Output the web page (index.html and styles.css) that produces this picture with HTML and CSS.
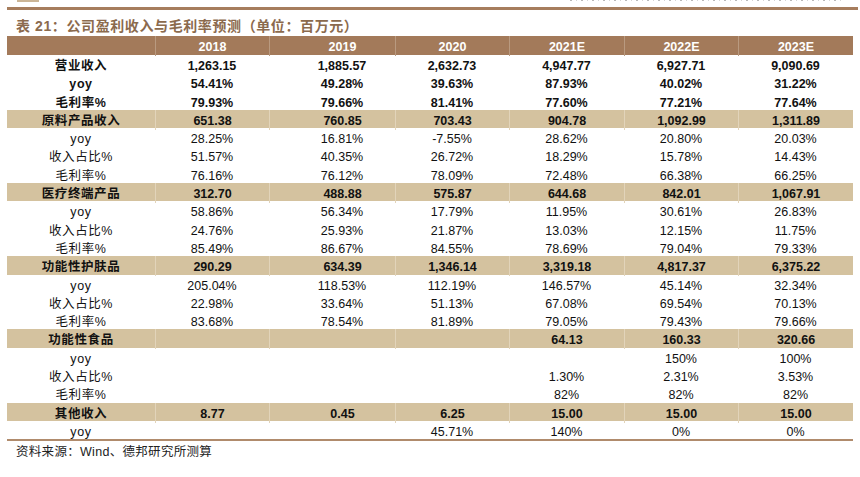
FILE: index.html
```html
<!DOCTYPE html>
<html lang="zh-CN">
<head>
<meta charset="utf-8">
<title>表 21</title>
<link rel="stylesheet" href="styles.css">
</head>
<body>
<div class="page">
  <div class="topstrip">
    <div class="tab-mark"></div>
    <div class="running-head"></div>
  </div>
  <div class="rule"></div>
  <div class="title">表 21：公司盈利收入与毛利率预测（单位：百万元）</div>

  <div class="table">
    <div class="row head"><div></div><div>2018</div><div>2019</div><div>2020</div><div>2021E</div><div>2022E</div><div>2023E</div></div>

    <div class="row strong"><div class="lbl">营业收入</div><div>1,263.15</div><div>1,885.57</div><div>2,632.73</div><div>4,947.77</div><div>6,927.71</div><div>9,090.69</div></div>
    <div class="row strong"><div class="lbl">yoy</div><div>54.41%</div><div>49.28%</div><div>39.63%</div><div>87.93%</div><div>40.02%</div><div>31.22%</div></div>
    <div class="row strong"><div class="lbl">毛利率%</div><div>79.93%</div><div>79.66%</div><div>81.41%</div><div>77.60%</div><div>77.21%</div><div>77.64%</div></div>

    <div class="row band"><div class="lbl">原料产品收入</div><div>651.38</div><div>760.85</div><div>703.43</div><div>904.78</div><div>1,092.99</div><div>1,311.89</div></div>
    <div class="row"><div class="lbl">yoy</div><div>28.25%</div><div>16.81%</div><div>-7.55%</div><div>28.62%</div><div>20.80%</div><div>20.03%</div></div>
    <div class="row"><div class="lbl">收入占比%</div><div>51.57%</div><div>40.35%</div><div>26.72%</div><div>18.29%</div><div>15.78%</div><div>14.43%</div></div>
    <div class="row"><div class="lbl">毛利率%</div><div>76.16%</div><div>76.12%</div><div>78.09%</div><div>72.48%</div><div>66.38%</div><div>66.25%</div></div>

    <div class="row band"><div class="lbl">医疗终端产品</div><div>312.70</div><div>488.88</div><div>575.87</div><div>644.68</div><div>842.01</div><div>1,067.91</div></div>
    <div class="row"><div class="lbl">yoy</div><div>58.86%</div><div>56.34%</div><div>17.79%</div><div>11.95%</div><div>30.61%</div><div>26.83%</div></div>
    <div class="row"><div class="lbl">收入占比%</div><div>24.76%</div><div>25.93%</div><div>21.87%</div><div>13.03%</div><div>12.15%</div><div>11.75%</div></div>
    <div class="row"><div class="lbl">毛利率%</div><div>85.49%</div><div>86.67%</div><div>84.55%</div><div>78.69%</div><div>79.04%</div><div>79.33%</div></div>

    <div class="row band"><div class="lbl">功能性护肤品</div><div>290.29</div><div>634.39</div><div>1,346.14</div><div>3,319.18</div><div>4,817.37</div><div>6,375.22</div></div>
    <div class="row"><div class="lbl">yoy</div><div>205.04%</div><div>118.53%</div><div>112.19%</div><div>146.57%</div><div>45.14%</div><div>32.34%</div></div>
    <div class="row"><div class="lbl">收入占比%</div><div>22.98%</div><div>33.64%</div><div>51.13%</div><div>67.08%</div><div>69.54%</div><div>70.13%</div></div>
    <div class="row"><div class="lbl">毛利率%</div><div>83.68%</div><div>78.54%</div><div>81.89%</div><div>79.05%</div><div>79.43%</div><div>79.66%</div></div>

    <div class="row band"><div class="lbl">功能性食品</div><div></div><div></div><div></div><div>64.13</div><div>160.33</div><div>320.66</div></div>
    <div class="row"><div class="lbl">yoy</div><div></div><div></div><div></div><div></div><div>150%</div><div>100%</div></div>
    <div class="row"><div class="lbl">收入占比%</div><div></div><div></div><div></div><div>1.30%</div><div>2.31%</div><div>3.53%</div></div>
    <div class="row"><div class="lbl">毛利率%</div><div></div><div></div><div></div><div>82%</div><div>82%</div><div>82%</div></div>

    <div class="row band"><div class="lbl">其他收入</div><div>8.77</div><div>0.45</div><div>6.25</div><div>15.00</div><div>15.00</div><div>15.00</div></div>
    <div class="row"><div class="lbl">yoy</div><div></div><div></div><div>45.71%</div><div>140%</div><div>0%</div><div>0%</div></div>
  </div>

  <div class="source">资料来源：Wind、德邦研究所测算</div>
</div>
</body>
</html>
```
FILE: styles.css
```css
* { box-sizing: border-box; }

body {
  margin: 0;
  background: #ffffff;
  font-family: "Liberation Sans", "Noto Sans CJK SC", sans-serif;
  color: #111111;
}

.page {
  width: 860px;
  height: 477px;
  overflow: hidden;
}

.topstrip {
  height: 7px;
  display: flex;
  justify-content: space-between;
  align-items: flex-start;
  overflow: hidden;
}

.tab-mark {
  margin-left: 17px;
  width: 22px;
  height: 2px;
  background: #cbb596;
}

.running-head {
  margin-right: 15px;
  width: 275px;
  height: 1px;
  background: repeating-linear-gradient(90deg, #9a9a9a 0 2px, transparent 2px 6px, #c4c4c4 6px 7px, transparent 7px 11px);
  opacity: 0.7;
}

.rule {
  margin-left: 7px;
  margin-right: 2px;
  height: 3px;
  background: #a67d5d;
}

.title {
  height: 26px;
  padding-top: 3px;
  padding-left: 16px;
  display: flex;
  align-items: center;
  font-size: 14px;
  font-weight: bold;
  letter-spacing: 0.6px;
  color: #8b6a4d;
}

.table {
  margin-left: 7px;
  width: 846px;
  border-bottom: 2px solid #b08b6c;
}

.row {
  display: grid;
  grid-template-columns: 148px 114px 126px 114px 115px 114px 115px;
  height: 18.3px;
  font-size: 12.5px;
}

.row > div {
  display: flex;
  align-items: center;
  justify-content: center;
  white-space: nowrap;
  line-height: 18px;
  padding-top: 2px;
}

.row > div:nth-child(3) {
  padding-left: 20px;
}

.lbl {
  letter-spacing: 0.6px;
}

.head {
  height: 19px;
  background: #a37a5a;
  color: #ffffff;
  font-weight: bold;
}

.head > div + div {
  border-left: 1px solid #b99a80;
}

.strong {
  font-weight: bold;
}

.band {
  background: #d4c29f;
  font-weight: bold;
}

.band > div + div {
  border-left: 1px solid #e2d4ba;
}

.source {
  margin-top: 4px;
  padding-left: 16px;
  font-size: 12.5px;
  line-height: 14px;
  letter-spacing: 0.3px;
  color: #222222;
}
```
